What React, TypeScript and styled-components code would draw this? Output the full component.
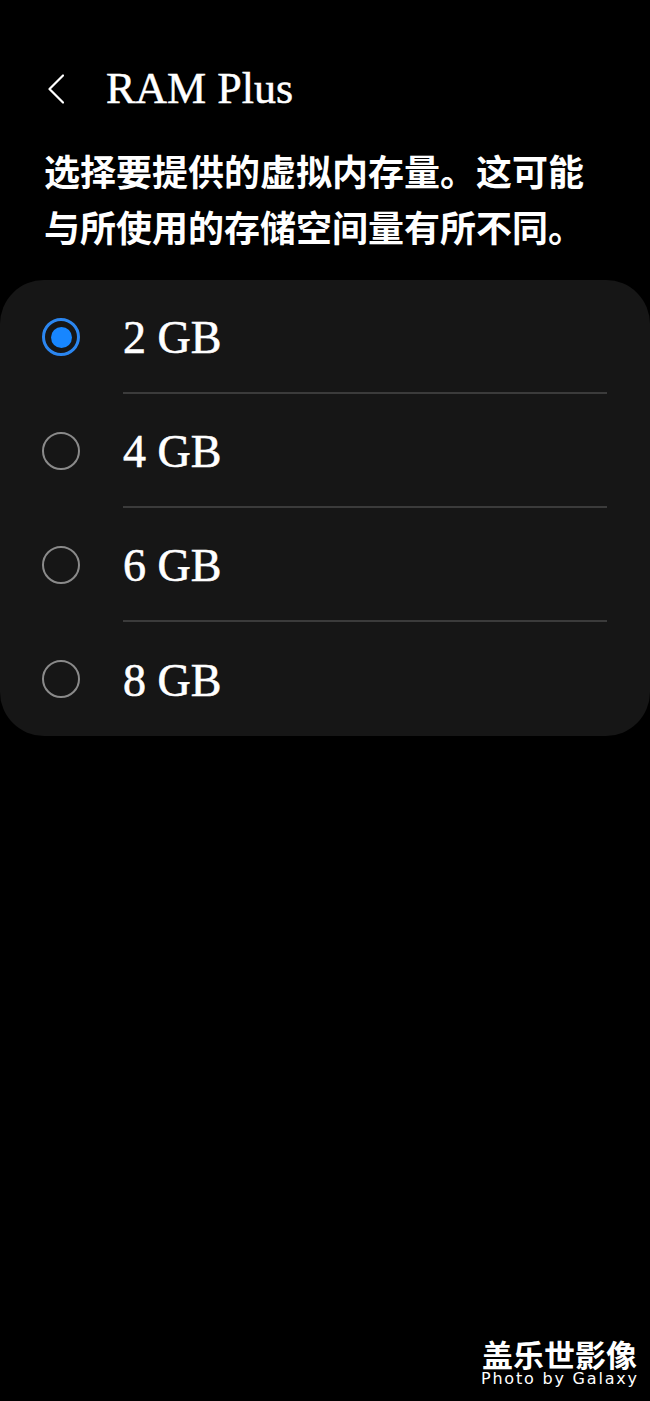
import { useState } from 'react';
import styled, { createGlobalStyle } from 'styled-components';

const GlobalStyle = createGlobalStyle`
  html, body {
    margin: 0;
    padding: 0;
    background: #000;
  }
`;

const Page = styled.div`
  position: relative;
  width: 650px;
  min-height: 1401px;
  background: #000;
  color: #fff;
  display: flex;
  flex-direction: column;
`;

const Header = styled.header`
  display: flex;
  align-items: center;
  height: 44px;
  margin-top: 67px;
  padding-left: 48px;
  gap: 42px;
`;

const BackButton = styled.button`
  background: none;
  border: none;
  padding: 0;
  width: 16px;
  height: 30px;
  display: flex;
  cursor: pointer;
`;

const Title = styled.h1`
  margin: 0;
  font-family: "Liberation Serif", serif;
  font-weight: 400;
  font-size: 44px;
  line-height: 44px;
  color: #fff;
  -webkit-text-stroke: 0.5px #fff;
`;

const Description = styled.p`
  margin: 31px 0 0 44px;
  width: 560px;
  font-family: "Noto Sans CJK SC", sans-serif;
  font-weight: 700;
  font-size: 36px;
  line-height: 56px;
  color: #fff;
`;

const Card = styled.div`
  margin-top: 26px;
  background: #161616;
  border-radius: 44px;
  display: flex;
  flex-direction: column;
`;

const Row = styled.label`
  display: flex;
  align-items: stretch;
  height: 114px;
  padding-left: 42px;
  cursor: pointer;
`;

const RadioBox = styled.span`
  display: flex;
  align-items: center;
  width: 38px;
  margin-right: 43px;
`;

const Ring = styled.span<{ $on: boolean }>`
  box-sizing: border-box;
  width: 38px;
  height: 38px;
  border-radius: 50%;
  border: ${(p) => (p.$on ? '3px solid #2b86f0' : '2px solid #8a8a8a')};
  display: flex;
  align-items: center;
  justify-content: center;
`;

const Dot = styled.span`
  width: 21px;
  height: 21px;
  border-radius: 50%;
  background: #1786ff;
`;

const Label = styled.span<{ $last: boolean }>`
  flex: 1;
  display: flex;
  align-items: center;
  margin-right: 43px;
  padding-top: 2px;
  border-bottom: ${(p) => (p.$last ? 'none' : '2px solid #3b3b3b')};
  font-family: "Liberation Serif", serif;
  font-size: 46px;
  color: #fff;
  -webkit-text-stroke: 0.6px #fff;
`;

const Watermark = styled.div`
  position: absolute;
  right: 13px;
  top: 1338px;
  display: flex;
  flex-direction: column;
  align-items: flex-end;
  color: #fff;
`;

const MarkTitle = styled.span`
  font-family: "Noto Sans CJK SC", sans-serif;
  font-weight: 700;
  font-size: 31px;
  line-height: 32px;
`;

const MarkSub = styled.span`
  font-family: "DejaVu Sans", sans-serif;
  font-size: 16px;
  line-height: 18px;
  letter-spacing: 1.8px;
  margin-right: -1.8px;
`;

const options = ['2 GB', '4 GB', '6 GB', '8 GB'];

function ChevronLeft() {
  return (
    <svg width="16" height="30" viewBox="0 0 16 30" fill="none">
      <path d="M15 1.5 L1.5 15 L15 28.5" stroke="#fff" strokeWidth="2.2" strokeLinecap="round" strokeLinejoin="round" />
    </svg>
  );
}

export default function App() {
  const [selected, setSelected] = useState(0);

  return (
    <Page>
      <GlobalStyle />
      <Header>
        <BackButton aria-label="返回">
          <ChevronLeft />
        </BackButton>
        <Title>RAM Plus</Title>
      </Header>
      <Description>选择要提供的虚拟内存量。这可能与所使用的存储空间量有所不同。</Description>
      <Card>
        {options.map((opt, i) => (
          <Row key={opt} onClick={() => setSelected(i)}>
            <RadioBox>
              <Ring $on={selected === i}>{selected === i && <Dot />}</Ring>
            </RadioBox>
            <Label $last={i === options.length - 1}>{opt}</Label>
          </Row>
        ))}
      </Card>
      <Watermark>
        <MarkTitle>盖乐世影像</MarkTitle>
        <MarkSub>Photo by Galaxy</MarkSub>
      </Watermark>
    </Page>
  );
}
